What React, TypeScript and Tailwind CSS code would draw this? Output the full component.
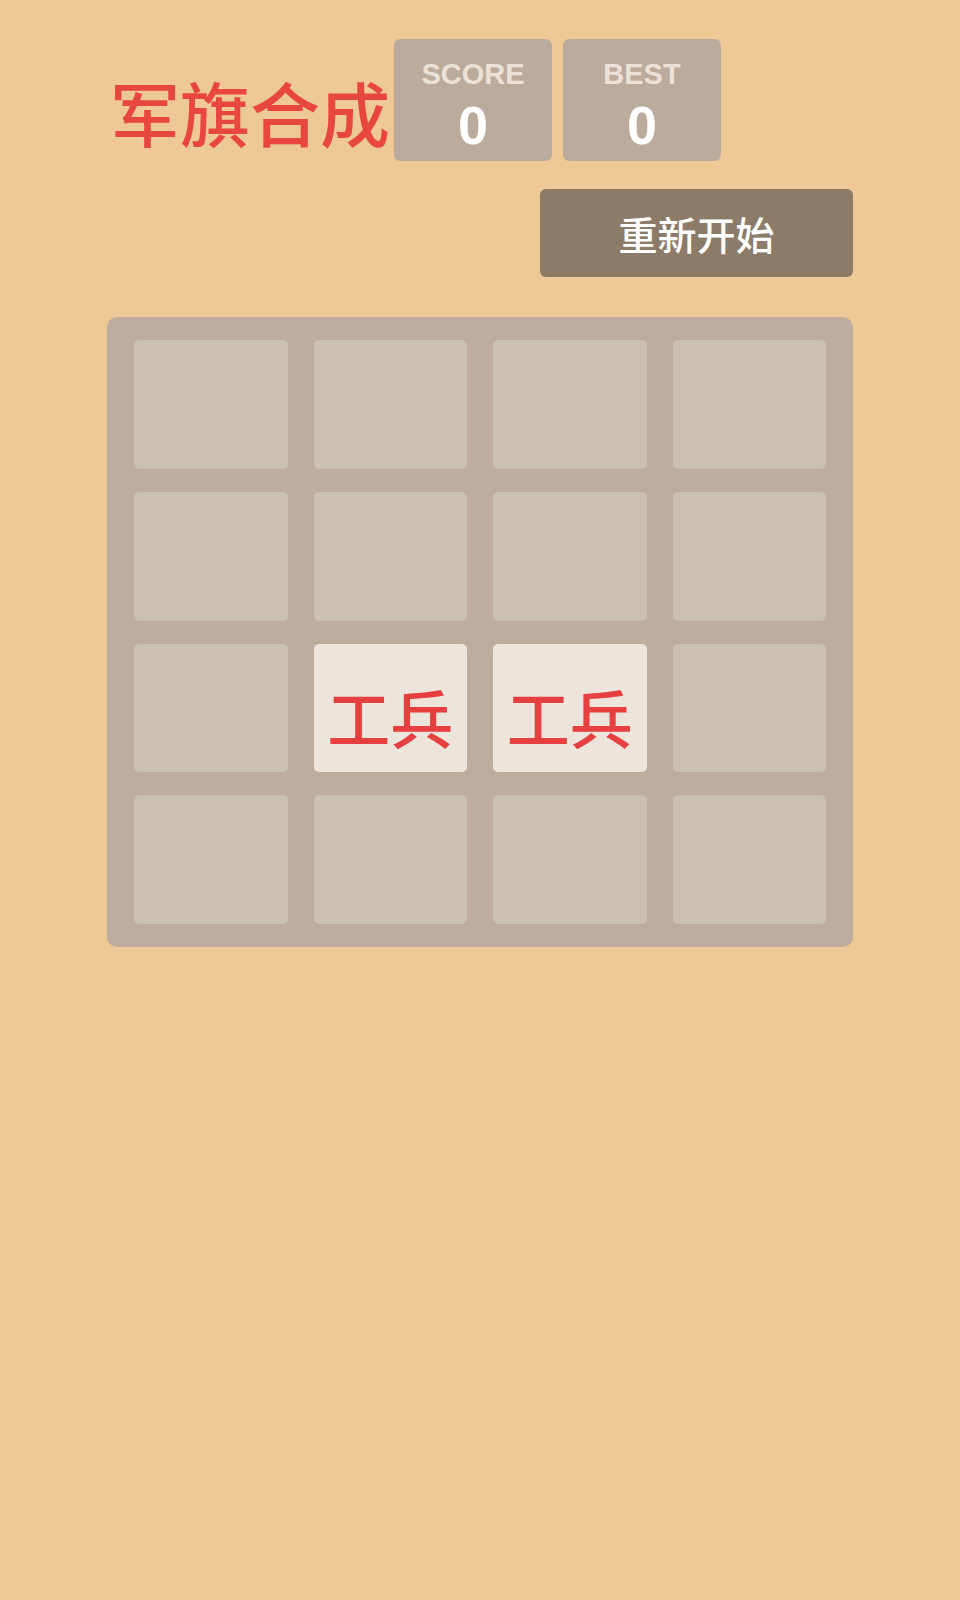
import React from "react";

const tiles: (string | null)[] = [
  null, null, null, null,
  null, null, null, null,
  null, "工兵", "工兵", null,
  null, null, null, null,
];

const cjk = '"Noto Sans CJK SC", "Noto Sans", sans-serif';
const latin = '"Liberation Sans", Arial, sans-serif';

export default function App() {
  return (
    <div
      className="min-h-[1600px] w-full bg-[#eec897]"
      style={{ fontFamily: cjk }}
    >
      <div className="mx-auto w-[746px] pt-[39px]">
        <div className="flex items-center">
          <h1 className="ml-[3px] mt-[24px] text-[70px] font-medium leading-none text-[#e8473f]" style={{ fontFamily: cjk }}>
            军旗合成
          </h1>
          <div className="ml-[4px] flex gap-[11px]">
            <div className="flex h-[122px] w-[158px] flex-col items-center rounded-[6px] bg-[#bbab9d] pt-[21px]">
              <div className="text-[29px] font-bold leading-none text-[#ece1d6]" style={{ fontFamily: latin }}>SCORE</div>
              <div className="mt-[9px] text-[54px] font-bold leading-none text-white" style={{ fontFamily: latin }}>0</div>
            </div>
            <div className="flex h-[122px] w-[158px] flex-col items-center rounded-[6px] bg-[#bbab9d] pt-[21px]">
              <div className="text-[29px] font-bold leading-none text-[#ece1d6]" style={{ fontFamily: latin }}>BEST</div>
              <div className="mt-[9px] text-[54px] font-bold leading-none text-white" style={{ fontFamily: latin }}>0</div>
            </div>
          </div>
        </div>
        <div className="mt-[28px] flex justify-end">
          <button className="flex h-[88px] w-[313px] items-center justify-center rounded-[6px] bg-[#8d7b69] text-[39px] font-medium text-white" style={{ fontFamily: cjk }}>
            重新开始
          </button>
        </div>
        <div className="mt-[40px] grid h-[630px] grid-cols-4 grid-rows-4 gap-x-[26px] gap-y-[23px] rounded-[10px] bg-[#bcad9f] px-[27px] py-[23px]">
          {tiles.map((t, i) =>
            t ? (
              <div
                key={i}
                className="flex items-center justify-center rounded-[5px] bg-[#ede4dc] pt-[16px] text-[63px] font-medium leading-none text-[#e5403f]"
                style={{ fontFamily: cjk }}
              >
                {t}
              </div>
            ) : (
              <div key={i} className="rounded-[5px] bg-[#c9bfb2]" />
            )
          )}
        </div>
      </div>
    </div>
  );
}
